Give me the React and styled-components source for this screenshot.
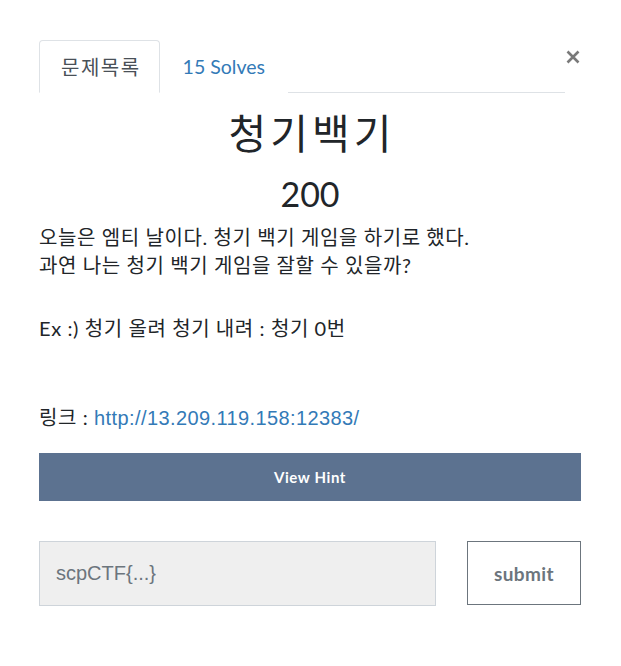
import React from "react";
import styled, { createGlobalStyle } from "styled-components";

const GlobalStyle = createGlobalStyle`
  html, body { margin: 0; padding: 0; background: #fff; }
  body {
    font-family: Lato, "Noto Sans CJK KR", sans-serif;
    color: #212529;
  }
  * { box-sizing: border-box; }
`;

const Modal = styled.div`
  padding: 40px 40px 40px 39px;
`;

const Header = styled.div`
  display: flex;
  align-items: flex-start;
`;

const Nav = styled.ul`
  flex: 1;
  display: flex;
  margin: 0;
  padding: 0;
  list-style: none;
  border-bottom: 1px solid #dee2e6;
`;

const Tab = styled.li`
  height: 53px;
  margin-bottom: -1px;
  padding: ${(p) => (p.$active ? "0 18px 0 21px" : "0 22px 0 22px")};
  display: flex;
  align-items: center;
  font-size: ${(p) => (p.$active ? "20px" : "19.5px")};
  letter-spacing: ${(p) => (p.$active ? "1.5px" : "0")};
  color: ${(p) => (p.$active ? "#495057" : "#337ab7")};
  border: 1px solid ${(p) => (p.$active ? "#dee2e6" : "transparent")};
  border-bottom-color: ${(p) => (p.$active ? "#fff" : "transparent")};
  border-radius: 4px 4px 0 0;
  background: #fff;
`;

const Close = styled.button`
  width: 16px;
  height: 16px;
  margin: 9px 0 0 0;
  padding: 0;
  border: 0;
  background: transparent;
  display: flex;
  align-items: center;
  justify-content: center;
  color: #7a7a7a;
`;

const Title = styled.h1`
  margin: 17px 0 0;
  font-size: 41px;
  line-height: 48px;
  font-weight: 400;
  letter-spacing: 4px;
  text-indent: 4px;
  text-align: center;
  color: #212529;
`;

const Points = styled.h3`
  margin: 16px 0 0;
  font-size: 34px;
  line-height: 40px;
  font-weight: 400;
  text-align: center;
  color: #212529;
`;

const Description = styled.div`
  margin-top: 9px;
  font-size: 20px;
  line-height: 28px;
  letter-spacing: 0.6px;
  color: #212529;
`;

const Para = styled.p`
  margin: 0 0 ${(p) => p.$gap || 0}px;
`;

const Link = styled.a`
  color: #337ab7;
  text-decoration: none;
  font-family: "Liberation Sans", Arial, sans-serif;
  letter-spacing: 0.4px;
`;

const HintButton = styled.button`
  display: block;
  width: 100%;
  height: 48px;
  margin-top: 21px;
  border: 0;
  background: #5c7290;
  color: #fff;
  font-family: Lato, sans-serif;
  font-size: 15px;
  font-weight: 700;
  letter-spacing: 0.6px;
`;

const SubmitRow = styled.div`
  display: flex;
  gap: 31px;
  margin-top: 40px;
`;

const FlagInput = styled.input`
  flex: 1;
  height: 65px;
  padding: 0 16px;
  border: 1px solid #ced4da;
  background: #efefef;
  font-family: "Liberation Sans", Arial, sans-serif;
  font-size: 20px;
  color: #495057;
  outline: none;
  &::placeholder { color: #6c757d; }
`;

const SubmitButton = styled.button`
  width: 114px;
  height: 64px;
  border: 1px solid #6c757d;
  background: #fff;
  color: #6c757d;
  font-family: Lato, sans-serif;
  font-size: 19px;
  font-weight: 700;
  letter-spacing: 0.4px;
`;

export default function App() {
  return (
    <>
      <GlobalStyle />
      <Modal>
        <Header>
          <Nav>
            <Tab $active>문제목록</Tab>
            <Tab>15 Solves</Tab>
          </Nav>
          <Close aria-label="Close">
            <svg width="14" height="14" viewBox="0 0 14 14">
              <path d="M1.5 1.5 L12.5 12.5 M12.5 1.5 L1.5 12.5" stroke="currentColor" strokeWidth="2.6" />
            </svg>
          </Close>
        </Header>
        <Title>청기백기</Title>
        <Points>200</Points>
        <Description>
          <Para $gap={35}>
            오늘은 엠티 날이다. 청기 백기 게임을 하기로 했다.
            <br />
            과연 나는 청기 백기 게임을 잘할 수 있을까?
          </Para>
          <Para $gap={61}>Ex :) 청기 올려 청기 내려 : 청기 0번</Para>
          <Para>
            링크 : <Link href="#">http://13.209.119.158:12383/</Link>
          </Para>
        </Description>
        <HintButton>View Hint</HintButton>
        <SubmitRow>
          <FlagInput placeholder="scpCTF{...}" />
          <SubmitButton>submit</SubmitButton>
        </SubmitRow>
      </Modal>
    </>
  );
}
